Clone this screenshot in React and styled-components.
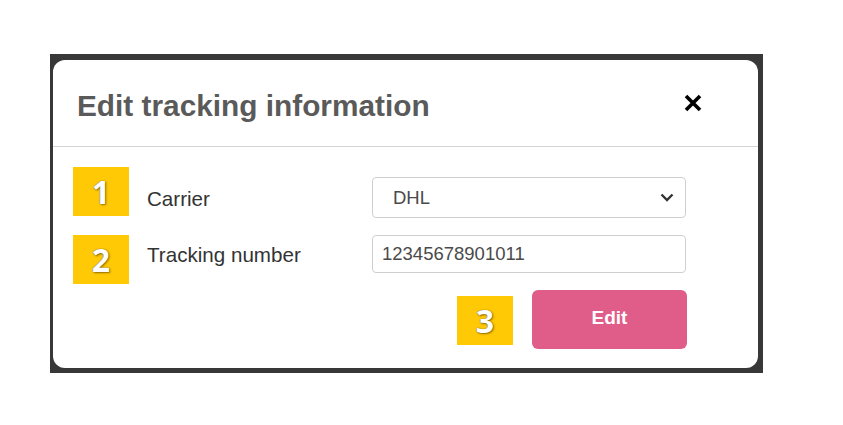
import React, { useState } from 'react'
import styled, { createGlobalStyle } from 'styled-components'

const GlobalStyle = createGlobalStyle`
    body {
        margin: 0;
        background: #fff;
        font-family: "Liberation Sans", Arial, sans-serif;
    }
`

const Page = styled.div`
    padding: 54px 0 0 50px;
`

const Backdrop = styled.div`
    width: 713px;
    box-sizing: border-box;
    padding: 6px 5px 5px 3px;
    background: #383838;
`

const Modal = styled.div`
    background: #fff;
    border-radius: 12px;
    overflow: hidden;
`

const Header = styled.div`
    height: 86px;
    display: flex;
    align-items: center;
    justify-content: space-between;
    padding: 0 55px 0 24px;
    border-bottom: 1px solid #d4d4d4;
`

const Title = styled.h2`
    margin: 0;
    font-size: 29.8px;
    font-weight: bold;
    color: #5a5a5a;
    position: relative;
    top: 3px;
`

const Close = styled.button`
    border: none;
    background: none;
    padding: 0;
    width: 20px;
    height: 18px;
    display: flex;
    cursor: pointer;
`

const Body = styled.div`
    padding: 20px 0 19px;
`

const Row = styled.div`
    display: flex;
    align-items: flex-start;
    padding: 0 72px 0 20px;
    margin-top: ${p => p.$top || 0}px;
`

const ActionRow = styled(Row)`
    justify-content: flex-end;
    padding-right: 71px;
    gap: 19px;
`

const Badge = styled.div`
    width: 56px;
    height: 49px;
    flex-shrink: 0;
    background: #ffc905;
    color: #fff;
    display: flex;
    align-items: center;
    justify-content: center;
    font-family: "Open Sans", sans-serif;
    font-weight: 700;
    font-size: 32px;
    text-shadow: 0 0 1px rgba(70, 50, 0, 0.9), 1px 1px 2px rgba(70, 50, 0, 0.55);
    margin-top: ${p => p.$offset || 0}px;
`

const Label = styled.label`
    flex: 1;
    margin-left: 18px;
    font-size: 20.6px;
    color: #333;
    line-height: 24px;
    margin-top: ${p => p.$offset || 0}px;
`

const SelectWrap = styled.div`
    position: relative;
    width: 314px;
    margin-top: 10px;
`

const Select = styled.select`
    appearance: none;
    width: 100%;
    height: 41px;
    box-sizing: border-box;
    border: 1px solid #cfcfcf;
    border-radius: 4px;
    background: #fff;
    padding: 0 40px 0 20px;
    font-family: "Liberation Sans", Arial, sans-serif;
    font-size: 18.5px;
    color: #4a4a4a;
    outline: none;
`

const Chevron = styled.svg`
    position: absolute;
    right: 12px;
    top: 16px;
    pointer-events: none;
`

const Input = styled.input`
    width: 314px;
    height: 38px;
    box-sizing: border-box;
    border: 1px solid #cfcfcf;
    border-radius: 4px;
    padding: 0 9px;
    font-family: "Liberation Sans", Arial, sans-serif;
    font-size: 18.5px;
    color: #4a4a4a;
    outline: none;
`

const EditButton = styled.button`
    width: 155px;
    height: 59px;
    border: none;
    border-radius: 6px;
    background: #e05d8a;
    color: #fff;
    font-family: "Liberation Sans", Arial, sans-serif;
    font-weight: bold;
    font-size: 19px;
    cursor: pointer;
    padding: 0 0 4px;
`

const App = () => {
    const [carrier, setCarrier] = useState("DHL")
    const [tracking, setTracking] = useState("12345678901011")

    return (
        <>
        <GlobalStyle />
        <Page>
            <Backdrop>
                <Modal>
                    <Header>
                        <Title>Edit tracking information</Title>
                        <Close aria-label="Close">
                            <svg width="20" height="18" viewBox="0 0 20 18">
                                <path d="M3 2 L17 16 M17 2 L3 16" stroke="#000" strokeWidth="3.6" />
                            </svg>
                        </Close>
                    </Header>
                    <Body>
                        <Row>
                            <Badge>1</Badge>
                            <Label $offset={20}>Carrier</Label>
                            <SelectWrap>
                                <Select value={carrier} onChange={(e) => setCarrier(e.target.value)}>
                                    <option>DHL</option>
                                    <option>UPS</option>
                                    <option>FedEx</option>
                                </Select>
                                <Chevron width="14" height="9" viewBox="0 0 14 9">
                                    <path d="M1.5 1.5 L7 7 L12.5 1.5" fill="none" stroke="#333" strokeWidth="2.4" />
                                </Chevron>
                            </SelectWrap>
                        </Row>
                        <Row $top={17}>
                            <Badge>2</Badge>
                            <Label $offset={8}>Tracking number</Label>
                            <Input value={tracking} onChange={(e) => setTracking(e.target.value)} />
                        </Row>
                        <ActionRow $top={6}>
                            <Badge $offset={6}>3</Badge>
                            <EditButton>Edit</EditButton>
                        </ActionRow>
                    </Body>
                </Modal>
            </Backdrop>
        </Page>
        </>
    )
}

export default App
